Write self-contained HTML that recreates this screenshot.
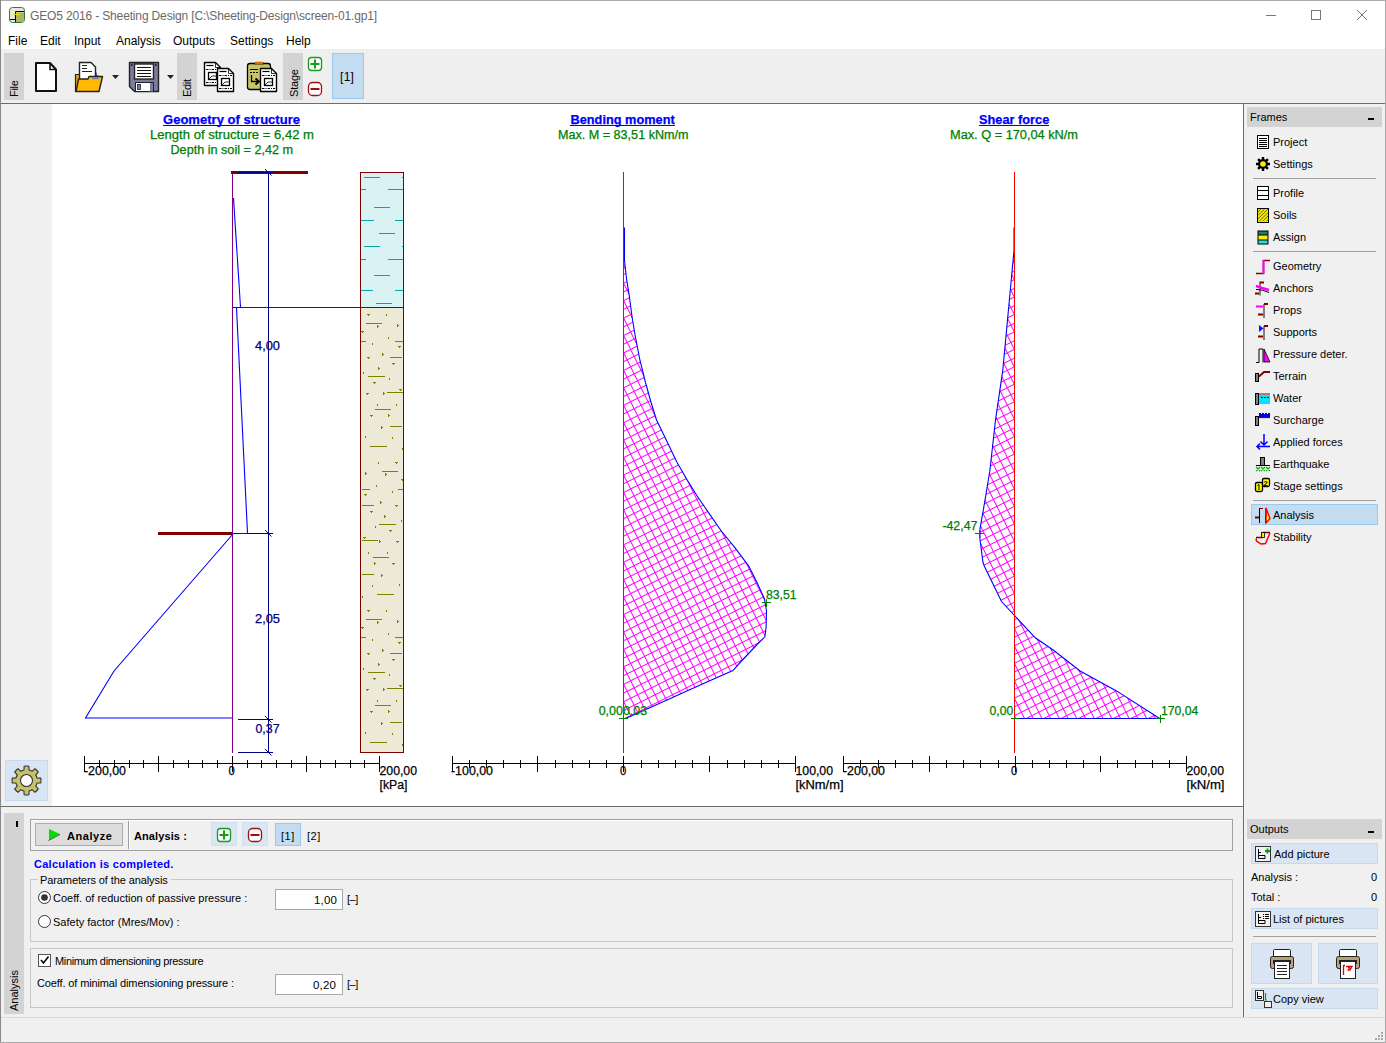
<!DOCTYPE html>
<html><head><meta charset="utf-8">
<style>
*{margin:0;padding:0;box-sizing:border-box}
html,body{width:1386px;height:1043px;overflow:hidden;background:#fff}
body{position:relative;font-family:"Liberation Sans",sans-serif;font-size:11px;color:#000}
.a{position:absolute}
.t{position:absolute;white-space:nowrap;line-height:1}
svg{position:absolute;left:0;top:0}
</style></head><body>
<!-- window borders -->
<div class="a" style="left:0;top:0;width:1386px;height:1px;background:#aaa"></div>
<div class="a" style="left:0;top:0;width:1px;height:1043px;background:#888"></div>
<div class="a" style="left:1385px;top:0;width:1px;height:1043px;background:#aaa"></div>
<div class="a" style="left:0;top:1042px;width:1386px;height:1px;background:#aaa"></div>

<!-- title -->
<div class="t" style="left:30px;top:10px;font-size:12px;color:#6a6a6a;letter-spacing:-0.15px">GEO5 2016 - Sheeting Design [C:\Sheeting-Design\screen-01.gp1]</div>
<!-- menu -->
<div class="t" style="left:8px;top:35px;font-size:12px;color:#000">File</div>
<div class="t" style="left:40px;top:35px;font-size:12px">Edit</div>
<div class="t" style="left:74px;top:35px;font-size:12px">Input</div>
<div class="t" style="left:116px;top:35px;font-size:12px">Analysis</div>
<div class="t" style="left:173px;top:35px;font-size:12px">Outputs</div>
<div class="t" style="left:230px;top:35px;font-size:12px">Settings</div>
<div class="t" style="left:286px;top:35px;font-size:12px">Help</div>

<!-- toolbar -->
<div class="a" style="left:1px;top:49px;width:1384px;height:54px;background:#efefef"></div>
<div class="a" style="left:1px;top:103px;width:1384px;height:1px;background:#6d6d6d"></div>


<!-- title icon -->
<svg width="1386" height="104" style="left:0;top:0">
 <rect x="9.5" y="7.5" width="15" height="15" rx="3" fill="#e9e9d8" stroke="#2e7d32" stroke-width="1"/>
 <path d="M15.5 12.5 H24 V22 H15.5 Z" fill="#b3b060"/>
 <path d="M10 19.5 H15.5 V22" fill="none" stroke="#000" stroke-width="1"/>
 <path d="M15.5 22 V11.5 H24" fill="none" stroke="#000" stroke-width="1"/>
 <path d="M13 14.5 H20" stroke="#e8e800" stroke-width="1"/>
 <!-- window controls -->
 <path d="M1266 15.5 H1276" stroke="#777" stroke-width="1"/>
 <rect x="1311.5" y="10.5" width="9" height="9" fill="none" stroke="#777" stroke-width="1"/>
 <path d="M1357 10 L1367 20 M1367 10 L1357 20" stroke="#777" stroke-width="1"/>
 <!-- toolbar tabs -->
 <rect x="4" y="53" width="20" height="47" fill="#d3d3d3"/>
 <rect x="177" y="53" width="20" height="47" fill="#d3d3d3"/>
 <rect x="283" y="53" width="20" height="47" fill="#d3d3d3"/>
 <text transform="translate(18,97) rotate(-90)" font-family="Liberation Sans" font-size="11" fill="#000" letter-spacing="-0.3">File</text>
 <text transform="translate(191,97) rotate(-90)" font-family="Liberation Sans" font-size="11" fill="#000" letter-spacing="-0.3">Edit</text>
 <text transform="translate(298,97) rotate(-90)" font-family="Liberation Sans" font-size="11" fill="#000" letter-spacing="-0.2">Stage</text>
 <!-- new doc -->
 <path d="M36 63 H50 L56 69.5 V91 H36 Z" fill="#fff" stroke="#111" stroke-width="2" stroke-linejoin="round"/>
 <path d="M50 63 V69.5 H56" fill="none" stroke="#111" stroke-width="1.6"/>
 <!-- open folder -->
 <path d="M75.5 74.5 H80 V73 H96 V76 H98 V91.5 H75.5 Z" fill="#f0a800" stroke="#222" stroke-width="1.2"/>
 <path d="M79.5 62.5 H91 L95.5 67 V80 H79.5 Z" fill="#fff" stroke="#222" stroke-width="1.4"/>
 <path d="M82 65.5 H87 M82 68.5 H87 M82 71.5 H92" stroke="#222" stroke-width="1"/>
 <path d="M78.5 79 H88 L89 76.5 H102.5 L99 91.5 H76 Z" fill="#ffb900" stroke="#222" stroke-width="1.4" stroke-linejoin="round"/>
 <path d="M92 78.5 H99" stroke="#7a7aa0" stroke-width="1.5"/>
 <path d="M112 75 H119 L115.5 79 Z" fill="#222"/>
 <!-- save -->
 <path d="M129.5 62.5 H158.5 V91.5 H134.5 L129.5 86.5 Z" fill="#7c7ca3" stroke="#222" stroke-width="1.4" stroke-linejoin="round"/>
 <rect x="134.5" y="64" width="19" height="15" fill="#fff" stroke="#222" stroke-width="1.4"/>
 <path d="M137 67.5 H151 M137 70.5 H151 M137 73.5 H151 M137 76.5 H151" stroke="#111" stroke-width="1"/>
 <rect x="135.5" y="82.5" width="18" height="9" fill="#fff" stroke="#222" stroke-width="1"/>
 <rect x="137.5" y="84.5" width="3" height="5" fill="#7c7ca3" stroke="#222" stroke-width="0.8"/>
 <rect x="150" y="83" width="3" height="8.5" fill="#7c7ca3"/>
 <rect x="131" y="64" width="1.5" height="2" fill="#222"/><rect x="155" y="64" width="1.5" height="2" fill="#222"/>
 <path d="M167 75 H174 L170.5 79 Z" fill="#222"/>
 <!-- copy -->
 <path d="M204.5 62.5 H215.5 L220.5 67.5 V85.5 H204.5 Z" fill="#fff" stroke="#000" stroke-width="1.4" stroke-linejoin="round"/>
 <path d="M215.5 63 V67.5 H220" fill="none" stroke="#000" stroke-width="0.8"/>
 <path d="M206.5 65.5 H213.5" stroke="#000" stroke-width="1.2"/>
 <path d="M206 69.5 H219" stroke="#000" stroke-width="1" stroke-dasharray="2.5 1 1 1"/>
 <path d="M206 82.5 H219" stroke="#000" stroke-width="1" stroke-dasharray="2.5 1 1 1"/>
 <rect x="208.5" y="72.5" width="8" height="7" fill="#fff" stroke="#000" stroke-width="1.3"/>
 <path d="M209 79 L212 76 H216" fill="none" stroke="#000" stroke-width="0.8"/>
<path d="M217.5 68.5 H228.5 L233.5 73.5 V91.5 H217.5 Z" fill="#fff" stroke="#000" stroke-width="1.4" stroke-linejoin="round"/>
 <path d="M228.5 69 V73.5 H233" fill="none" stroke="#000" stroke-width="0.8"/>
 <path d="M219.5 71.5 H226.5" stroke="#000" stroke-width="1.2"/>
 <path d="M219 75.5 H232" stroke="#000" stroke-width="1" stroke-dasharray="2.5 1 1 1"/>
 <path d="M219 88.5 H232" stroke="#000" stroke-width="1" stroke-dasharray="2.5 1 1 1"/>
 <rect x="221.5" y="78.5" width="8" height="7" fill="#fff" stroke="#000" stroke-width="1.3"/>
 <path d="M222 85 L225 82 H229" fill="none" stroke="#000" stroke-width="0.8"/>
<!-- paste -->
 <rect x="247.5" y="63.5" width="23" height="26" rx="2.5" fill="#c9c567" stroke="#000" stroke-width="1.3"/>
 <path d="M254 63.5 H264" stroke="#000" stroke-width="1.6"/>
 <path d="M256 63 H262" stroke="#d07000" stroke-width="2.4" stroke-linecap="round"/>
 <path d="M250 69.5 H258" stroke="#000" stroke-width="1"/>
 <path d="M250 72.5 H258" stroke="#000" stroke-width="1" stroke-dasharray="2 1"/>
 <path d="M251.5 75 V81.5 H258" fill="none" stroke="#000" stroke-width="1.3"/>
 <path d="M255.5 78.5 L259 81.5 L255.5 84.5" fill="none" stroke="#000" stroke-width="1.8"/>
 <path d="M260.5 68.5 H271.5 L276.5 73.5 V91.5 H260.5 Z" fill="#fff" stroke="#000" stroke-width="1.4" stroke-linejoin="round"/>
 <path d="M271.5 69 V73.5 H276" fill="none" stroke="#000" stroke-width="0.8"/>
 <path d="M262.5 71.5 H269.5" stroke="#000" stroke-width="1.2"/>
 <path d="M262 75.5 H275" stroke="#000" stroke-width="1" stroke-dasharray="2.5 1 1 1"/>
 <path d="M262 88.5 H275" stroke="#000" stroke-width="1" stroke-dasharray="2.5 1 1 1"/>
 <rect x="264.5" y="78.5" width="8" height="7" fill="#fff" stroke="#000" stroke-width="1.3"/>
 <path d="M265 85 L268 82 H272" fill="none" stroke="#000" stroke-width="0.8"/>
 <!-- stage + - -->
 <rect x="308.5" y="57.5" width="13" height="13" rx="3" fill="#fff" stroke="#1a9a1a" stroke-width="1.3"/>
 <path d="M315 59.5 V68.5 M310.5 64 H319.5" stroke="#1a9a1a" stroke-width="2"/>
 <rect x="308.5" y="82.5" width="13" height="13" rx="4" fill="#fff" stroke="#a01010" stroke-width="1.3"/>
 <path d="M310.5 89 H319.5" stroke="#a01010" stroke-width="2"/>
 <rect x="332.5" y="53.5" width="31" height="45" fill="#c4dcf2" stroke="#99c9ef" stroke-width="1"/>
</svg>
<div class="t" style="left:340px;top:71px;font-size:12px;color:#000;letter-spacing:0.3px">[1]</div>

<!-- left strip -->
<div class="a" style="left:1px;top:104px;width:51px;height:702px;background:#f0f0f0"></div>
<!-- CHART START -->
<svg width="1386" height="1043" style="left:0;top:0" shape-rendering="crispEdges">
<defs>
<pattern id="hatch" patternUnits="userSpaceOnUse" width="7.8" height="7.8" patternTransform="translate(623,562) rotate(-26.57)">
<path d="M0 0.5 H7.8 M0.5 0 V7.8" stroke="#ff00ff" stroke-width="1" shape-rendering="auto"/>
</pattern>
<clipPath id="soilclip"><rect x="361" y="308" width="42" height="444"/></clipPath>
</defs>
<rect x="52" y="104" width="1191" height="702" fill="#fff"/>
<rect x="84.4" y="763" width="295.79999999999995" height="1" fill="#000"/>
<rect x="84" y="756" width="1" height="16" fill="#000"/>
<rect x="99" y="760" width="1" height="8" fill="#000"/>
<rect x="114" y="760" width="1" height="8" fill="#000"/>
<rect x="129" y="760" width="1" height="8" fill="#000"/>
<rect x="143" y="760" width="1" height="8" fill="#000"/>
<rect x="158" y="756" width="1" height="16" fill="#000"/>
<rect x="173" y="760" width="1" height="8" fill="#000"/>
<rect x="188" y="760" width="1" height="8" fill="#000"/>
<rect x="202" y="760" width="1" height="8" fill="#000"/>
<rect x="217" y="760" width="1" height="8" fill="#000"/>
<rect x="232" y="756" width="1" height="16" fill="#000"/>
<rect x="247" y="760" width="1" height="8" fill="#000"/>
<rect x="261" y="760" width="1" height="8" fill="#000"/>
<rect x="276" y="760" width="1" height="8" fill="#000"/>
<rect x="291" y="760" width="1" height="8" fill="#000"/>
<rect x="306" y="756" width="1" height="16" fill="#000"/>
<rect x="320" y="760" width="1" height="8" fill="#000"/>
<rect x="335" y="760" width="1" height="8" fill="#000"/>
<rect x="350" y="760" width="1" height="8" fill="#000"/>
<rect x="364" y="760" width="1" height="8" fill="#000"/>
<rect x="379" y="756" width="1" height="16" fill="#000"/>
<rect x="451.5" y="763" width="344.79999999999995" height="1" fill="#000"/>
<rect x="452" y="756" width="1" height="16" fill="#000"/>
<rect x="469" y="760" width="1" height="8" fill="#000"/>
<rect x="486" y="760" width="1" height="8" fill="#000"/>
<rect x="503" y="760" width="1" height="8" fill="#000"/>
<rect x="520" y="760" width="1" height="8" fill="#000"/>
<rect x="537" y="756" width="1" height="16" fill="#000"/>
<rect x="555" y="760" width="1" height="8" fill="#000"/>
<rect x="572" y="760" width="1" height="8" fill="#000"/>
<rect x="589" y="760" width="1" height="8" fill="#000"/>
<rect x="606" y="760" width="1" height="8" fill="#000"/>
<rect x="623" y="756" width="1" height="16" fill="#000"/>
<rect x="641" y="760" width="1" height="8" fill="#000"/>
<rect x="658" y="760" width="1" height="8" fill="#000"/>
<rect x="675" y="760" width="1" height="8" fill="#000"/>
<rect x="692" y="760" width="1" height="8" fill="#000"/>
<rect x="709" y="756" width="1" height="16" fill="#000"/>
<rect x="727" y="760" width="1" height="8" fill="#000"/>
<rect x="744" y="760" width="1" height="8" fill="#000"/>
<rect x="761" y="760" width="1" height="8" fill="#000"/>
<rect x="778" y="760" width="1" height="8" fill="#000"/>
<rect x="795" y="756" width="1" height="16" fill="#000"/>
<rect x="843.3" y="763" width="343.70000000000005" height="1" fill="#000"/>
<rect x="843" y="756" width="1" height="16" fill="#000"/>
<rect x="860" y="760" width="1" height="8" fill="#000"/>
<rect x="878" y="760" width="1" height="8" fill="#000"/>
<rect x="895" y="760" width="1" height="8" fill="#000"/>
<rect x="912" y="760" width="1" height="8" fill="#000"/>
<rect x="929" y="756" width="1" height="16" fill="#000"/>
<rect x="946" y="760" width="1" height="8" fill="#000"/>
<rect x="963" y="760" width="1" height="8" fill="#000"/>
<rect x="980" y="760" width="1" height="8" fill="#000"/>
<rect x="998" y="760" width="1" height="8" fill="#000"/>
<rect x="1015" y="756" width="1" height="16" fill="#000"/>
<rect x="1032" y="760" width="1" height="8" fill="#000"/>
<rect x="1049" y="760" width="1" height="8" fill="#000"/>
<rect x="1066" y="760" width="1" height="8" fill="#000"/>
<rect x="1083" y="760" width="1" height="8" fill="#000"/>
<rect x="1100" y="756" width="1" height="16" fill="#000"/>
<rect x="1117" y="760" width="1" height="8" fill="#000"/>
<rect x="1135" y="760" width="1" height="8" fill="#000"/>
<rect x="1152" y="760" width="1" height="8" fill="#000"/>
<rect x="1169" y="760" width="1" height="8" fill="#000"/>
<rect x="1186" y="756" width="1" height="16" fill="#000"/>
<rect x="361" y="173" width="42" height="134" fill="#d9f2f3"/>
<rect x="361" y="308" width="42" height="444" fill="#ecead6"/>
<rect x="364" y="177" width="16" height="1" fill="#00a8a8"/>
<rect x="402" y="177" width="1" height="1" fill="#00a8a8"/>
<rect x="361" y="189" width="5" height="1" fill="#00a8a8"/>
<rect x="388" y="189" width="15" height="1" fill="#00a8a8"/>
<rect x="374" y="207" width="16" height="1" fill="#00a8a8"/>
<rect x="361" y="220" width="13" height="1" fill="#00a8a8"/>
<rect x="395" y="220" width="8" height="1" fill="#00a8a8"/>
<rect x="379" y="233" width="16" height="1" fill="#00a8a8"/>
<rect x="364" y="246" width="16" height="1" fill="#00a8a8"/>
<rect x="402" y="246" width="1" height="1" fill="#00a8a8"/>
<rect x="361" y="259" width="5" height="1" fill="#00a8a8"/>
<rect x="388" y="259" width="15" height="1" fill="#00a8a8"/>
<rect x="374" y="275" width="16" height="1" fill="#00a8a8"/>
<rect x="361" y="290" width="12" height="1" fill="#00a8a8"/>
<rect x="395" y="290" width="8" height="1" fill="#00a8a8"/>
<rect x="376" y="303" width="16" height="1" fill="#00a8a8"/>
<g clip-path="url(#soilclip)" fill="#808000">
<rect x="366" y="323" width="16" height="1"/>
<rect x="361" y="341" width="5" height="1"/>
<rect x="395" y="341" width="8" height="1"/>
<rect x="390" y="357" width="12" height="1"/>
<rect x="368" y="376" width="17" height="1"/>
<rect x="387" y="392" width="16" height="1"/>
<rect x="375" y="409" width="16" height="1"/>
<rect x="390" y="426" width="12" height="1"/>
<rect x="370" y="446" width="17" height="1"/>
<rect x="367" y="314" width="3" height="1"/><rect x="368" y="315" width="1" height="1"/>
<rect x="361" y="331" width="3" height="1"/><rect x="362" y="332" width="1" height="1"/>
<rect x="398" y="346" width="3" height="1"/><rect x="399" y="347" width="1" height="1"/>
<rect x="367" y="357" width="3" height="1"/><rect x="368" y="358" width="1" height="1"/>
<rect x="392" y="363" width="3" height="1"/><rect x="393" y="364" width="1" height="1"/>
<rect x="373" y="382" width="3" height="1"/><rect x="374" y="383" width="1" height="1"/>
<rect x="366" y="393" width="3" height="1"/><rect x="367" y="394" width="1" height="1"/>
<rect x="399" y="389" width="3" height="1"/><rect x="400" y="390" width="1" height="1"/>
<rect x="370" y="415" width="3" height="1"/><rect x="371" y="416" width="1" height="1"/>
<rect x="377" y="325" width="1" height="3"/><rect x="378" y="326" width="1" height="1"/>
<rect x="397" y="324" width="1" height="3"/><rect x="398" y="325" width="1" height="1"/>
<rect x="382" y="353" width="1" height="3"/><rect x="383" y="354" width="1" height="1"/>
<rect x="378" y="367" width="1" height="3"/><rect x="379" y="368" width="1" height="1"/>
<rect x="383" y="392" width="1" height="3"/><rect x="384" y="393" width="1" height="1"/>
<rect x="388" y="414" width="1" height="3"/><rect x="389" y="415" width="1" height="1"/>
<rect x="381" y="426" width="1" height="3"/><rect x="382" y="427" width="1" height="1"/>
<rect x="386" y="314" width="1" height="2"/>
<rect x="388" y="337" width="1" height="2"/>
<rect x="372" y="343" width="1" height="2"/>
<rect x="363" y="372" width="1" height="2"/>
<rect x="389" y="378" width="1" height="2"/>
<rect x="377" y="404" width="1" height="2"/>
<rect x="396" y="404" width="1" height="2"/>
<rect x="365" y="436" width="1" height="2"/>
<rect x="392" y="437" width="1" height="2"/>
<rect x="402" y="448" width="1" height="2"/>
<rect x="382" y="471" width="16" height="1"/>
<rect x="398" y="489" width="5" height="1"/>
<rect x="362" y="489" width="8" height="1"/>
<rect x="362" y="505" width="12" height="1"/>
<rect x="379" y="524" width="17" height="1"/>
<rect x="362" y="540" width="16" height="1"/>
<rect x="373" y="557" width="16" height="1"/>
<rect x="362" y="574" width="12" height="1"/>
<rect x="377" y="594" width="17" height="1"/>
<rect x="395" y="462" width="3" height="1"/><rect x="396" y="463" width="1" height="1"/>
<rect x="401" y="479" width="3" height="1"/><rect x="402" y="480" width="1" height="1"/>
<rect x="364" y="494" width="3" height="1"/><rect x="365" y="495" width="1" height="1"/>
<rect x="395" y="505" width="3" height="1"/><rect x="396" y="506" width="1" height="1"/>
<rect x="370" y="511" width="3" height="1"/><rect x="371" y="512" width="1" height="1"/>
<rect x="389" y="530" width="3" height="1"/><rect x="390" y="531" width="1" height="1"/>
<rect x="396" y="541" width="3" height="1"/><rect x="397" y="542" width="1" height="1"/>
<rect x="363" y="537" width="3" height="1"/><rect x="364" y="538" width="1" height="1"/>
<rect x="392" y="563" width="3" height="1"/><rect x="393" y="564" width="1" height="1"/>
<rect x="385" y="473" width="1" height="3"/><rect x="386" y="474" width="1" height="1"/>
<rect x="365" y="472" width="1" height="3"/><rect x="366" y="473" width="1" height="1"/>
<rect x="380" y="501" width="1" height="3"/><rect x="381" y="502" width="1" height="1"/>
<rect x="384" y="515" width="1" height="3"/><rect x="385" y="516" width="1" height="1"/>
<rect x="379" y="540" width="1" height="3"/><rect x="380" y="541" width="1" height="1"/>
<rect x="374" y="562" width="1" height="3"/><rect x="375" y="563" width="1" height="1"/>
<rect x="381" y="574" width="1" height="3"/><rect x="382" y="575" width="1" height="1"/>
<rect x="378" y="462" width="1" height="2"/>
<rect x="376" y="485" width="1" height="2"/>
<rect x="392" y="491" width="1" height="2"/>
<rect x="401" y="520" width="1" height="2"/>
<rect x="375" y="526" width="1" height="2"/>
<rect x="387" y="552" width="1" height="2"/>
<rect x="368" y="552" width="1" height="2"/>
<rect x="399" y="584" width="1" height="2"/>
<rect x="372" y="585" width="1" height="2"/>
<rect x="362" y="596" width="1" height="2"/>
<rect x="366" y="619" width="16" height="1"/>
<rect x="361" y="637" width="5" height="1"/>
<rect x="395" y="637" width="8" height="1"/>
<rect x="390" y="653" width="12" height="1"/>
<rect x="368" y="672" width="17" height="1"/>
<rect x="387" y="688" width="16" height="1"/>
<rect x="375" y="705" width="16" height="1"/>
<rect x="390" y="722" width="12" height="1"/>
<rect x="370" y="742" width="17" height="1"/>
<rect x="367" y="610" width="3" height="1"/><rect x="368" y="611" width="1" height="1"/>
<rect x="361" y="627" width="3" height="1"/><rect x="362" y="628" width="1" height="1"/>
<rect x="398" y="642" width="3" height="1"/><rect x="399" y="643" width="1" height="1"/>
<rect x="367" y="653" width="3" height="1"/><rect x="368" y="654" width="1" height="1"/>
<rect x="392" y="659" width="3" height="1"/><rect x="393" y="660" width="1" height="1"/>
<rect x="373" y="678" width="3" height="1"/><rect x="374" y="679" width="1" height="1"/>
<rect x="366" y="689" width="3" height="1"/><rect x="367" y="690" width="1" height="1"/>
<rect x="399" y="685" width="3" height="1"/><rect x="400" y="686" width="1" height="1"/>
<rect x="370" y="711" width="3" height="1"/><rect x="371" y="712" width="1" height="1"/>
<rect x="377" y="621" width="1" height="3"/><rect x="378" y="622" width="1" height="1"/>
<rect x="397" y="620" width="1" height="3"/><rect x="398" y="621" width="1" height="1"/>
<rect x="382" y="649" width="1" height="3"/><rect x="383" y="650" width="1" height="1"/>
<rect x="378" y="663" width="1" height="3"/><rect x="379" y="664" width="1" height="1"/>
<rect x="383" y="688" width="1" height="3"/><rect x="384" y="689" width="1" height="1"/>
<rect x="388" y="710" width="1" height="3"/><rect x="389" y="711" width="1" height="1"/>
<rect x="381" y="722" width="1" height="3"/><rect x="382" y="723" width="1" height="1"/>
<rect x="386" y="610" width="1" height="2"/>
<rect x="388" y="633" width="1" height="2"/>
<rect x="372" y="639" width="1" height="2"/>
<rect x="363" y="668" width="1" height="2"/>
<rect x="389" y="674" width="1" height="2"/>
<rect x="377" y="700" width="1" height="2"/>
<rect x="396" y="700" width="1" height="2"/>
<rect x="365" y="732" width="1" height="2"/>
<rect x="392" y="733" width="1" height="2"/>
<rect x="402" y="744" width="1" height="2"/>
</g>
<rect x="360.5" y="172.5" width="43" height="580" fill="none" stroke="#800000" stroke-width="1"/>
<rect x="232" y="307" width="172" height="1" fill="#800000"/>
<rect x="231" y="171" width="77" height="3" fill="#800000"/>
<rect x="158" y="532" width="75" height="3" fill="#800000"/>
<rect x="232" y="173" width="1" height="580" fill="#800080"/>
<rect x="268" y="172" width="1" height="581" fill="#000080"/>
<rect x="238" y="172" width="35" height="1" fill="#000080"/>
<rect x="233" y="533" width="40" height="1" fill="#000080"/>
<rect x="238" y="719" width="35" height="1" fill="#000080"/>
<rect x="238" y="752" width="35" height="1" fill="#000080"/>
<path d="M265 169 L271.5 175.5" stroke="#000080" stroke-width="1" shape-rendering="auto"/>
<path d="M265 530 L271.5 536.5" stroke="#000080" stroke-width="1" shape-rendering="auto"/>
<path d="M265 716 L271.5 722.5" stroke="#000080" stroke-width="1" shape-rendering="auto"/>
<path d="M265 749 L271.5 755.5" stroke="#000080" stroke-width="1" shape-rendering="auto"/>
<g fill="none" stroke="#0000ff" stroke-width="1.1" shape-rendering="auto">
<path d="M233.5 198 L240.5 307"/>
<path d="M236.5 308 L247.5 533"/>
<path d="M233 534 L114 671 L85.5 718 H232"/>
</g>
<rect x="233" y="533" width="15" height="1" fill="#0000ff"/>
<path d="M623.5 227.5 L624.5 227.5 L624.5 260.5 L626.5 278.5 L629.2 295.3 L632.0 316.5 L635.5 337.5 L640.0 360.5 L645.5 382.5 L650.5 400.5 L656.5 420.0 L666.5 440.5 L676.8 462.0 L687.5 480.5 L696.8 495.5 L707.5 511.1 L721.3 531.0 L735.1 547.9 L748.9 566.3 L756.5 581.5 L764.3 598.5 L766.5 610.5 L766.1 627.5 L764.9 636.8 L757.1 644.5 L741.5 661.0 L732.9 670.5 L705.2 682.7 L649.8 707.8 L625.5 718.5 L623.5 718.5 Z" fill="url(#hatch)" stroke="none" shape-rendering="auto"/>
<path d="M624.5 227.5 L624.5 260.5 L626.5 278.5 L629.2 295.3 L632.0 316.5 L635.5 337.5 L640.0 360.5 L645.5 382.5 L650.5 400.5 L656.5 420.0 L666.5 440.5 L676.8 462.0 L687.5 480.5 L696.8 495.5 L707.5 511.1 L721.3 531.0 L735.1 547.9 L748.9 566.3 L756.5 581.5 L764.3 598.5 L766.5 610.5 L766.1 627.5 L764.9 636.8 L757.1 644.5 L741.5 661.0 L732.9 670.5 L705.2 682.7 L649.8 707.8 L625.5 718.5" fill="none" stroke="#0000ff" stroke-width="1.1" shape-rendering="auto"/>
<rect x="623" y="172" width="1" height="581" fill="#ff0000"/>
<path d="M1014.5 227.5 L1014.0 227.5 L1014.0 250.5 L1009.8 295.5 L1002.8 370.1 L995.5 420.0 L989.9 470.5 L986.1 493.5 L983.0 511.9 L980.0 528.8 L980.0 539.5 L983.0 562.5 L984.5 566.5 L1001.5 601.5 L1014.5 615.5 L1035.3 637.8 L1053.5 650.3 L1080.1 671.0 L1116.5 690.9 L1159.7 718.5 L1014.5 718.5 Z" fill="url(#hatch)" stroke="none" shape-rendering="auto"/>
<path d="M1014.0 227.5 L1014.0 250.5 L1009.8 295.5 L1002.8 370.1 L995.5 420.0 L989.9 470.5 L986.1 493.5 L983.0 511.9 L980.0 528.8 L980.0 539.5 L983.0 562.5 L984.5 566.5 L1001.5 601.5 L1014.5 615.5 L1035.3 637.8 L1053.5 650.3 L1080.1 671.0 L1116.5 690.9 L1159.7 718.5 L1014.5 718.5" fill="none" stroke="#0000ff" stroke-width="1.1" shape-rendering="auto"/>
<rect x="1014" y="172" width="1" height="581" fill="#ff0000"/>
<rect x="762" y="602" width="9" height="1" fill="#008000"/>
<rect x="766" y="599" width="1" height="8" fill="#008000"/>
<rect x="975" y="533" width="9" height="1" fill="#008000"/>
<rect x="979" y="530" width="1" height="8" fill="#008000"/>
<rect x="1156" y="718" width="9" height="1" fill="#008000"/>
<rect x="1160" y="715" width="1" height="8" fill="#008000"/>
<rect x="619" y="718" width="9" height="1" fill="#008000"/>
<rect x="1011" y="718" width="8" height="1" fill="#008000"/>
<text x="163" y="124" textLength="137" lengthAdjust="spacingAndGlyphs" font-family="Liberation Sans" font-size="12.3" fill="#0000ff" font-weight="bold" shape-rendering="auto" stroke="#0000ff" stroke-width="0.25">Geometry of structure</text>
<rect x="163" y="125" width="137" height="1" fill="#0000ff"/>
<text x="150" y="139" textLength="164" lengthAdjust="spacingAndGlyphs" font-family="Liberation Sans" font-size="12.3" fill="#008000" shape-rendering="auto" stroke="#008000" stroke-width="0.25">Length of structure = 6,42 m</text>
<text x="170.5" y="154" textLength="122.5" lengthAdjust="spacingAndGlyphs" font-family="Liberation Sans" font-size="12.3" fill="#008000" shape-rendering="auto" stroke="#008000" stroke-width="0.25">Depth in soil = 2,42 m</text>
<text x="570.5" y="124" textLength="104.2" lengthAdjust="spacingAndGlyphs" font-family="Liberation Sans" font-size="12.3" fill="#0000ff" font-weight="bold" shape-rendering="auto" stroke="#0000ff" stroke-width="0.25">Bending moment</text>
<rect x="570" y="125" width="105" height="1" fill="#0000ff"/>
<text x="558" y="139" textLength="130.5" lengthAdjust="spacingAndGlyphs" font-family="Liberation Sans" font-size="12.3" fill="#008000" shape-rendering="auto" stroke="#008000" stroke-width="0.25">Max. M = 83,51 kNm/m</text>
<text x="979" y="124" textLength="70.3" lengthAdjust="spacingAndGlyphs" font-family="Liberation Sans" font-size="12.3" fill="#0000ff" font-weight="bold" shape-rendering="auto" stroke="#0000ff" stroke-width="0.25">Shear force</text>
<rect x="979" y="125" width="70" height="1" fill="#0000ff"/>
<text x="950" y="139" textLength="128" lengthAdjust="spacingAndGlyphs" font-family="Liberation Sans" font-size="12.3" fill="#008000" shape-rendering="auto" stroke="#008000" stroke-width="0.25">Max. Q = 170,04 kN/m</text>
<text x="255" y="350" textLength="25" lengthAdjust="spacingAndGlyphs" font-family="Liberation Sans" font-size="12.3" fill="#000080" shape-rendering="auto" stroke="#000080" stroke-width="0.25">4,00</text>
<text x="255" y="623" textLength="25" lengthAdjust="spacingAndGlyphs" font-family="Liberation Sans" font-size="12.3" fill="#000080" shape-rendering="auto" stroke="#000080" stroke-width="0.25">2,05</text>
<text x="255.5" y="733" textLength="24" lengthAdjust="spacingAndGlyphs" font-family="Liberation Sans" font-size="12.3" fill="#000080" shape-rendering="auto" stroke="#000080" stroke-width="0.25">0,37</text>
<text x="84" y="775" textLength="42" lengthAdjust="spacingAndGlyphs" font-family="Liberation Sans" font-size="12.3" fill="#000" shape-rendering="auto" stroke="#000" stroke-width="0.25">-200,00</text>
<text x="228.5" y="775" textLength="6.2" lengthAdjust="spacingAndGlyphs" font-family="Liberation Sans" font-size="12.3" fill="#000" shape-rendering="auto" stroke="#000" stroke-width="0.25">0</text>
<text x="379.5" y="775" textLength="37.5" lengthAdjust="spacingAndGlyphs" font-family="Liberation Sans" font-size="12.3" fill="#000" shape-rendering="auto" stroke="#000" stroke-width="0.25">200,00</text>
<text x="379.5" y="789" textLength="28" lengthAdjust="spacingAndGlyphs" font-family="Liberation Sans" font-size="12.3" fill="#000" shape-rendering="auto" stroke="#000" stroke-width="0.25">[kPa]</text>
<text x="451" y="775" textLength="42" lengthAdjust="spacingAndGlyphs" font-family="Liberation Sans" font-size="12.3" fill="#000" shape-rendering="auto" stroke="#000" stroke-width="0.25">-100,00</text>
<text x="620" y="775" textLength="6.2" lengthAdjust="spacingAndGlyphs" font-family="Liberation Sans" font-size="12.3" fill="#000" shape-rendering="auto" stroke="#000" stroke-width="0.25">0</text>
<text x="795.5" y="775" textLength="37.5" lengthAdjust="spacingAndGlyphs" font-family="Liberation Sans" font-size="12.3" fill="#000" shape-rendering="auto" stroke="#000" stroke-width="0.25">100,00</text>
<text x="795.5" y="789" textLength="48" lengthAdjust="spacingAndGlyphs" font-family="Liberation Sans" font-size="12.3" fill="#000" shape-rendering="auto" stroke="#000" stroke-width="0.25">[kNm/m]</text>
<text x="843" y="775" textLength="42" lengthAdjust="spacingAndGlyphs" font-family="Liberation Sans" font-size="12.3" fill="#000" shape-rendering="auto" stroke="#000" stroke-width="0.25">-200,00</text>
<text x="1011" y="775" textLength="6.2" lengthAdjust="spacingAndGlyphs" font-family="Liberation Sans" font-size="12.3" fill="#000" shape-rendering="auto" stroke="#000" stroke-width="0.25">0</text>
<text x="1186.5" y="775" textLength="37.5" lengthAdjust="spacingAndGlyphs" font-family="Liberation Sans" font-size="12.3" fill="#000" shape-rendering="auto" stroke="#000" stroke-width="0.25">200,00</text>
<text x="1186.5" y="789" textLength="38" lengthAdjust="spacingAndGlyphs" font-family="Liberation Sans" font-size="12.3" fill="#000" shape-rendering="auto" stroke="#000" stroke-width="0.25">[kN/m]</text>
<text x="766" y="599" textLength="30.5" lengthAdjust="spacingAndGlyphs" font-family="Liberation Sans" font-size="12.3" fill="#008000" shape-rendering="auto" stroke="#008000" stroke-width="0.25">83,51</text>
<text x="598.7" y="715" textLength="48.5" lengthAdjust="spacingAndGlyphs" font-family="Liberation Sans" font-size="12.3" fill="#008000" shape-rendering="auto" stroke="#008000" stroke-width="0.25">0,000,03</text>
<text x="942.4" y="530" textLength="35" lengthAdjust="spacingAndGlyphs" font-family="Liberation Sans" font-size="12.3" fill="#008000" shape-rendering="auto" stroke="#008000" stroke-width="0.25">-42,47</text>
<text x="989.6" y="715" textLength="23.6" lengthAdjust="spacingAndGlyphs" font-family="Liberation Sans" font-size="12.3" fill="#008000" shape-rendering="auto" stroke="#008000" stroke-width="0.25">0,00</text>
<text x="1161" y="715" textLength="37.2" lengthAdjust="spacingAndGlyphs" font-family="Liberation Sans" font-size="12.3" fill="#008000" shape-rendering="auto" stroke="#008000" stroke-width="0.25">170,04</text>
</svg>
<!-- CHART END -->
<!-- right panel -->
<div class="a" style="left:1243px;top:104px;width:1px;height:913px;background:#6d6d6d"></div>
<div class="a" style="left:1244px;top:104px;width:141px;height:913px;background:#f0f0f0"></div>
<!-- right panel content -->
<div class="a" style="left:1247px;top:107px;width:135px;height:20px;background:#d3d3d3"></div>
<div class="t" style="left:1250px;top:112px;font-size:11px;color:#000">Frames</div>
<div class="a" style="left:1368px;top:118px;width:6px;height:2px;background:#000"></div>
<div class="a" style="left:1253px;top:178px;width:123px;height:1px;background:#a0a0a0"></div>
<div class="a" style="left:1253px;top:251px;width:123px;height:1px;background:#a0a0a0"></div>
<div class="a" style="left:1253px;top:500px;width:123px;height:1px;background:#a0a0a0"></div>
<div class="a" style="left:1251px;top:504px;width:127px;height:21px;background:#c4dcf2;border:1px solid #99c9ef"></div>
<div class="t" style="left:1273px;top:137px;font-size:11px;color:#000">Project</div>
<div class="t" style="left:1273px;top:159px;font-size:11px;color:#000">Settings</div>
<div class="t" style="left:1273px;top:188px;font-size:11px;color:#000">Profile</div>
<div class="t" style="left:1273px;top:210px;font-size:11px;color:#000">Soils</div>
<div class="t" style="left:1273px;top:232px;font-size:11px;color:#000">Assign</div>
<div class="t" style="left:1273px;top:261px;font-size:11px;color:#000">Geometry</div>
<div class="t" style="left:1273px;top:283px;font-size:11px;color:#000">Anchors</div>
<div class="t" style="left:1273px;top:305px;font-size:11px;color:#000">Props</div>
<div class="t" style="left:1273px;top:327px;font-size:11px;color:#000">Supports</div>
<div class="t" style="left:1273px;top:349px;font-size:11px;color:#000">Pressure deter.</div>
<div class="t" style="left:1273px;top:371px;font-size:11px;color:#000">Terrain</div>
<div class="t" style="left:1273px;top:393px;font-size:11px;color:#000">Water</div>
<div class="t" style="left:1273px;top:415px;font-size:11px;color:#000">Surcharge</div>
<div class="t" style="left:1273px;top:437px;font-size:11px;color:#000">Applied forces</div>
<div class="t" style="left:1273px;top:459px;font-size:11px;color:#000">Earthquake</div>
<div class="t" style="left:1273px;top:481px;font-size:11px;color:#000">Stage settings</div>
<div class="t" style="left:1273px;top:510px;font-size:11px;color:#000">Analysis</div>
<div class="t" style="left:1273px;top:532px;font-size:11px;color:#000">Stability</div>

<svg width="1386" height="1043" style="left:0;top:0">
 <!-- Project -->
 <rect x="1257.5" y="135.5" width="11" height="13" fill="#fff" stroke="#000"/>
 <path d="M1259 138.5 H1267 M1259 140.5 H1267 M1259 142.5 H1267 M1259 144.5 H1267 M1259 146.5 H1267" stroke="#000" stroke-width="1"/>
 <!-- Settings gear -->
 <g transform="translate(1263,164)">
  <circle r="5" fill="#000"/>
  <path d="M-1.2 -7 H1.2 V7 H-1.2 Z M-7 -1.2 V1.2 H7 V-1.2 Z" fill="#000"/>
  <path d="M-1.2 -7 H1.2 V7 H-1.2 Z M-7 -1.2 V1.2 H7 V-1.2 Z" fill="#000" transform="rotate(45)"/>
  <circle r="2.8" fill="#ffeb00"/>
 </g>
 <!-- Profile -->
 <rect x="1257.5" y="186.5" width="11" height="13" fill="#fff" stroke="#000"/>
 <path d="M1258 190.5 H1268 M1258 195.5 H1268" stroke="#000"/>
 <!-- Soils -->
 <rect x="1257.5" y="208.5" width="11" height="14" fill="#f2e600" stroke="#000"/>
 <path d="M1258 212 L1261 209 M1258 215.5 L1264.5 209 M1258 219 L1268 209 M1259.5 221 L1268 212.5 M1263 221 L1268 216 M1266.5 221 L1268 219.5" stroke="#6a6000" stroke-width="0.9"/>
 <!-- Assign -->
 <rect x="1257.5" y="230.5" width="11" height="14" fill="#000"/>
 <rect x="1258.5" y="231.5" width="9" height="3" fill="#1e8060"/>
 <rect x="1258.5" y="235.5" width="9" height="4" fill="#ffee00"/>
 <rect x="1258.5" y="240.5" width="9" height="3" fill="#20e0e0"/>
 <!-- Geometry -->
 <path d="M1256 273.5 H1263.5 V260.5 H1270" fill="none" stroke="#8b0000" stroke-width="1.5"/>
 <path d="M1263.5 274 V260" stroke="#ff00ff" stroke-width="2"/>
 <!-- Anchors -->
 <path d="M1260 281.5 V295.5" stroke="#808080" stroke-width="2"/>
 <path d="M1260 282.5 H1264 M1255 293.5 H1259" stroke="#800000" stroke-width="2"/>
 <path d="M1256 289.5 L1262 290 L1269 292.5" stroke="#000" stroke-width="1" fill="none"/>
 <path d="M1256 286 L1262 288 L1269 290" stroke="#ff00ff" stroke-width="2.4" fill="none"/>
 <!-- Props -->
 <path d="M1264 304 V318" stroke="#808080" stroke-width="2"/>
 <path d="M1256 306.5 H1263" stroke="#ff00ff" stroke-width="2"/>
 <path d="M1264 304 H1268 M1258 314.5 H1263" stroke="#800000" stroke-width="2"/>
 <!-- Supports -->
 <path d="M1264 326 V340" stroke="#808080" stroke-width="2"/>
 <path d="M1259 325 L1263.5 328.5 L1259 332 Z" fill="#1010ff"/>
 <path d="M1264 326 H1268 M1258 336.5 H1263" stroke="#800000" stroke-width="2"/>
 <!-- Pressure deter -->
 <path d="M1256 362.5 H1259 V349 H1263 V362.5" fill="none" stroke="#000" stroke-width="1"/>
 <path d="M1264 349 L1270 362 H1264 Z" fill="#ff00ff" stroke="#000" stroke-width="0.8"/>
 <!-- Terrain -->
 <rect x="1255.5" y="373.5" width="3" height="8" fill="#808080" stroke="#000"/>
 <path d="M1259 376.5 L1264 372 H1270" fill="none" stroke="#800000" stroke-width="1.8"/>
 <!-- Water -->
 <rect x="1255.5" y="393.5" width="3" height="11" fill="#808080" stroke="#000"/>
 <rect x="1259" y="395" width="11" height="9" fill="#00e5ff"/>
 <path d="M1259 394 H1270" stroke="#800000" stroke-width="1"/>
 <path d="M1261 397.5 H1269" stroke="#0000ff" stroke-dasharray="2 1"/>
 <!-- Surcharge -->
 <rect x="1255.5" y="416.5" width="3" height="9" fill="#808080" stroke="#000"/>
 <path d="M1259 417.5 H1270" stroke="#800000" stroke-width="1.2"/>
 <rect x="1259" y="413" width="11" height="4" fill="#0000e0"/>
 <path d="M1261 413.5 H1262 M1264 413.5 H1265 M1267 413.5 H1268" stroke="#f0f0f0" stroke-width="1"/>
 <!-- Applied forces -->
 <path d="M1264 434 V445 M1260.5 441.5 L1264 445 L1267.5 441.5" fill="none" stroke="#0000ff" stroke-width="1.5"/>
 <path d="M1270 446.5 H1257 M1260 443.5 L1257 446.5 L1260 449.5" fill="none" stroke="#0000ff" stroke-width="1.5"/>
 <!-- Earthquake -->
 <rect x="1260.5" y="457.5" width="4" height="8" fill="#808080" stroke="#000"/>
 <path d="M1256 465.5 H1270" stroke="#000"/>
 <path d="M1256 467 L1260 471 M1260 467 L1256 471 M1261 467 L1265 471 M1265 467 L1261 471 M1266 467 L1270 471 M1270 467 L1266 471" fill="none" stroke="#00b000" stroke-width="1.1"/>
 <!-- Stage settings -->
 <rect x="1262.5" y="478.5" width="7" height="8" rx="1.5" fill="#ffff00" stroke="#000" stroke-width="1.3"/>
 <rect x="1255.5" y="482.5" width="7" height="9" rx="1.5" fill="#ffff00" stroke="#000" stroke-width="1.3"/>
 <path d="M1257.5 485.5 L1259 484.5 V490" fill="none" stroke="#000" stroke-width="1"/>
 <text x="1263.6" y="485.6" font-family="Liberation Sans" font-size="7.5" font-weight="bold">2</text>
 <!-- Analysis -->
 <path d="M1255 517.5 H1259" stroke="#800000" stroke-width="2"/>
 <path d="M1259.5 508 V523" stroke="#000" stroke-width="1"/>
 <path d="M1259.5 508.5 H1263" stroke="#800000" stroke-width="1"/>
 <path d="M1265.5 508 V523" stroke="#000" stroke-width="1"/>
 <path d="M1266 508 Q1268 513 1270 518.5 L1266 523 Z" fill="#ffee00" stroke="#ff0000" stroke-width="1.3"/>
 <path d="M1266 508 V516" stroke="#ff0000" stroke-width="1.8"/>
 <!-- Stability -->
 <path d="M1256 538.5 L1256.5 541 L1261 544 L1265.5 543.5 L1270 533" fill="none" stroke="#ff0000" stroke-width="1.5"/>
 <path d="M1256 537.5 H1262 V533 M1262 532.5 H1270" fill="none" stroke="#800000" stroke-width="1.6"/>
 <rect x="1261.5" y="532.5" width="3" height="5" fill="#ffee00" stroke="#000" stroke-width="0.8"/>
</svg>


<!-- outputs section -->
<div class="a" style="left:1247px;top:819px;width:135px;height:20px;background:#d3d3d3"></div>
<div class="t" style="left:1250px;top:824px;font-size:11px">Outputs</div>
<div class="a" style="left:1368px;top:831px;width:6px;height:2px;background:#000"></div>
<div class="a" style="left:1251px;top:843px;width:127px;height:21px;background:#d9e5f2;border:1px solid #c5daf0"></div>
<div class="t" style="left:1274px;top:849px;font-size:11px">Add picture</div>
<div class="t" style="left:1251px;top:872px;font-size:11px">Analysis :</div>
<div class="t" style="left:1371px;top:872px;font-size:11px">0</div>
<div class="t" style="left:1251px;top:892px;font-size:11px">Total :</div>
<div class="t" style="left:1371px;top:892px;font-size:11px">0</div>
<div class="a" style="left:1251px;top:908px;width:127px;height:21px;background:#d9e5f2;border:1px solid #c5daf0"></div>
<div class="t" style="left:1273px;top:914px;font-size:11px">List of pictures</div>
<div class="a" style="left:1253px;top:936px;width:123px;height:1px;background:#a0a0a0"></div>
<div class="a" style="left:1251px;top:943px;width:61px;height:41px;background:#d9e5f2;border:1px solid #c5daf0"></div>
<div class="a" style="left:1318px;top:943px;width:60px;height:41px;background:#d9e5f2;border:1px solid #c5daf0"></div>
<div class="a" style="left:1251px;top:988px;width:127px;height:21px;background:#d9e5f2;border:1px solid #c5daf0"></div>
<div class="t" style="left:1273px;top:994px;font-size:11px">Copy view</div>
<svg width="1386" height="1043" style="left:0;top:0">
 <!-- add picture icon -->
 <rect x="1255.5" y="846.5" width="15" height="15" fill="#f0f0f0" stroke="#333"/>
 <path d="M1258.5 849 V858.5 H1265 V855.5 H1258.5 M1258.5 852.5 H1261" fill="none" stroke="#000"/>
 <path d="M1265 851 H1270 M1267.5 848.5 V853.5" stroke="#00a000" stroke-width="1.8"/>
 <!-- list icon -->
 <rect x="1255.5" y="911.5" width="15" height="15" fill="#f0f0f0" stroke="#333"/>
 <path d="M1258.5 914 V923.5 H1265 V920.5 H1258.5 M1258.5 917.5 H1261" fill="none" stroke="#000"/>
 <path d="M1263 914.5 H1264 M1265 914.5 H1269 M1263 916.5 H1264 M1265 916.5 H1269 M1263 918.5 H1264 M1265 918.5 H1269" stroke="#000"/>
 <!-- printers -->
 <g transform="translate(1270,949)">
  <rect x="3.5" y="0.5" width="17" height="8" rx="1" fill="#fff" stroke="#222"/>
  <rect x="0.5" y="7.5" width="23" height="12" rx="2" fill="#b8a27a" stroke="#222"/>
  <rect x="3.5" y="11.5" width="17" height="3" fill="#666" stroke="#222"/>
  <rect x="4.5" y="12.5" width="15" height="17" fill="#fff" stroke="#222"/>
  <path d="M7 16.5 H17 M7 19.5 H17 M7 22.5 H17 M7 25.5 H17" stroke="#222"/>
 </g>
 <g transform="translate(1336,949)">
  <rect x="3.5" y="0.5" width="17" height="8" rx="1" fill="#fff" stroke="#222"/>
  <rect x="0.5" y="7.5" width="23" height="12" rx="2" fill="#b8a27a" stroke="#222"/>
  <rect x="3.5" y="11.5" width="17" height="3" fill="#666" stroke="#222"/>
  <rect x="4.5" y="12.5" width="15" height="17" fill="#fff" stroke="#222"/>
  <path d="M7.5 16 V26 M7.5 16.5 H9 M10 17.5 H16 L14 21 H11.5 M12 19 H14" fill="none" stroke="#e00000" stroke-width="1.3"/>
 </g>
 <!-- copy view icon -->
 <rect x="1255.5" y="990.5" width="8" height="10" fill="#f0f0f0" stroke="#333"/>
 <path d="M1257.5 992 V998.5 H1261.5 V996.5 H1257.5" fill="none" stroke="#000"/>
 <path d="M1265.5 993 V1000 H1267" fill="none" stroke="#00a000" stroke-width="1.2"/>
 <rect x="1264.5" y="1001.5" width="7" height="6" fill="#f0f0f0" stroke="#333"/>
 <!-- gear in left strip -->
 <rect x="5.5" y="760.5" width="42" height="40" fill="#d9e5f2" stroke="#c5daf0"/>
 <g transform="translate(26.5,780.5)">
  <path d="M-2.52 -10.50 L-2.39 -14.30 A14.5 14.5 0 0 1 2.39 -14.30 L2.52 -10.50 A10.8 10.8 0 0 1 5.64 -9.21 L8.42 -11.80 A14.5 14.5 0 0 1 11.80 -8.42 L9.21 -5.64 A10.8 10.8 0 0 1 10.50 -2.52 L14.30 -2.39 A14.5 14.5 0 0 1 14.30 2.39 L10.50 2.52 A10.8 10.8 0 0 1 9.21 5.64 L11.80 8.42 A14.5 14.5 0 0 1 8.42 11.80 L5.64 9.21 A10.8 10.8 0 0 1 2.52 10.50 L2.39 14.30 A14.5 14.5 0 0 1 -2.39 14.30 L-2.52 10.50 A10.8 10.8 0 0 1 -5.64 9.21 L-8.42 11.80 A14.5 14.5 0 0 1 -11.80 8.42 L-9.21 5.64 A10.8 10.8 0 0 1 -10.50 2.52 L-14.30 2.39 A14.5 14.5 0 0 1 -14.30 -2.39 L-10.50 -2.52 A10.8 10.8 0 0 1 -9.21 -5.64 L-11.80 -8.42 A14.5 14.5 0 0 1 -8.42 -11.80 L-5.64 -9.21 A10.8 10.8 0 0 1 -2.52 -10.50 Z" fill="#c6c16b" stroke="#333" stroke-width="1.1" stroke-linejoin="round"/>
  <circle r="6" fill="#fff" stroke="#333" stroke-width="1.1"/>
 </g>
 
</svg>

<!-- bottom panel -->
<div class="a" style="left:1px;top:806px;width:1242px;height:1px;background:#6d6d6d"></div>
<div class="a" style="left:1px;top:807px;width:1242px;height:210px;background:#f0f0f0"></div>

<!-- bottom panel content -->
<div class="a" style="left:4px;top:813px;width:20px;height:201px;background:#d3d3d3"></div>
<div class="a" style="left:16px;top:821px;width:2px;height:6px;background:#000"></div>
<svg width="1386" height="1043" style="left:0;top:0">
 <text transform="translate(18,1011) rotate(-90)" font-family="Liberation Sans" font-size="11" fill="#000" textLength="41" lengthAdjust="spacingAndGlyphs">Analysis</text>
 <!-- toolbar group box -->
 <rect x="30.5" y="819.5" width="1202" height="31" fill="none" stroke="#a0a0a0"/>
 <path d="M31 820.5 H1232" stroke="#fff"/>
 <rect x="35.5" y="823.5" width="87" height="22" fill="#dcdcdc" stroke="#adadad"/>
 <path d="M49 829 L60 834 L49 840 Z" fill="#00e000"/>
 <path d="M48.5 840.5 L60 834.5" stroke="#333" stroke-width="0.8"/>
 <path d="M128.5 821 V849" stroke="#a0a0a0"/>
 <path d="M129.5 821 V849" stroke="#fff"/>
 <rect x="211.5" y="822.5" width="25" height="23" fill="#d9e6f3" stroke="#d0e0f0"/>
 <rect x="217.5" y="828.5" width="13" height="13" rx="3" fill="#fff" stroke="#1a9a1a" stroke-width="1.3"/>
 <path d="M224 830.5 V839.5 M219.5 835 H228.5" stroke="#1a9a1a" stroke-width="2"/>
 <rect x="242.5" y="822.5" width="25" height="23" fill="#d9e6f3" stroke="#d0e0f0"/>
 <rect x="248.5" y="828.5" width="13" height="13" rx="4" fill="#fff" stroke="#a01010" stroke-width="1.3"/>
 <path d="M250.5 835 H259.5" stroke="#a01010" stroke-width="2"/>
 <rect x="275.5" y="823.5" width="25" height="22" fill="#c4dcf2" stroke="#99c9ef"/>
 <!-- group boxes -->
 <rect x="30.5" y="879.5" width="1202" height="62" fill="none" stroke="#c8c8c8"/>
 <rect x="30.5" y="948.5" width="1202" height="59" fill="none" stroke="#c8c8c8"/>
 <rect x="38" y="875" width="133" height="10" fill="#f0f0f0"/>
 <!-- radios -->
 <circle cx="44.5" cy="897.5" r="6" fill="#fff" stroke="#333" stroke-width="1"/>
 <circle cx="44.5" cy="897.5" r="3.3" fill="#333"/>
 <circle cx="44.5" cy="921.5" r="6" fill="#fff" stroke="#333" stroke-width="1"/>
 <!-- checkbox -->
 <rect x="38.5" y="954.5" width="12" height="12" fill="#fff" stroke="#555"/>
 <path d="M41 960 L43.5 963 L48.5 956.5" fill="none" stroke="#000" stroke-width="1.6"/>
 <!-- inputs -->
 <rect x="275.5" y="889.5" width="67" height="20" fill="#fff" stroke="#a9a9a9"/>
 <rect x="275.5" y="974.5" width="67" height="20" fill="#fff" stroke="#a9a9a9"/>
</svg>
<div class="t" style="left:67px;top:831px;font-size:11px;font-weight:bold;letter-spacing:0.55px">Analyze</div>
<div class="t" style="left:134px;top:831px;font-size:11px;font-weight:bold;letter-spacing:0.1px">Analysis :</div>
<div class="t" style="left:281px;top:831px;font-size:11px;letter-spacing:0.5px">[1]</div>
<div class="t" style="left:307px;top:831px;font-size:11px;letter-spacing:0.5px">[2]</div>
<div class="t" style="left:34px;top:859px;font-size:11px;font-weight:bold;color:#0000ff;letter-spacing:0.28px">Calculation is completed.</div>
<div class="t" style="left:40px;top:875px;font-size:11px;letter-spacing:-0.1px">Parameters of the analysis</div>
<div class="t" style="left:53px;top:893px;font-size:11px">Coeff. of reduction of passive pressure :</div>
<div class="t" style="left:53px;top:917px;font-size:11px">Safety factor (Mres/Mov) :</div>
<div class="t" style="left:55px;top:956px;font-size:11px;letter-spacing:-0.35px">Minimum dimensioning pressure</div>
<div class="t" style="left:37px;top:978px;font-size:11px;letter-spacing:-0.13px">Coeff. of minimal dimensioning pressure :</div>
<div class="t" style="left:314px;top:895px;font-size:11.5px;letter-spacing:0.2px">1,00</div>
<div class="t" style="left:313px;top:980px;font-size:11.5px;letter-spacing:0.2px">0,20</div>
<div class="t" style="left:347px;top:894px;font-size:11px;letter-spacing:-0.5px">[–]</div>
<div class="t" style="left:347px;top:979px;font-size:11px;letter-spacing:-0.5px">[–]</div>

<!-- status bar -->
<div class="a" style="left:1px;top:1017px;width:1384px;height:1px;background:#dadada"></div>
<div class="a" style="left:1px;top:1018px;width:1384px;height:24px;background:#f0f0f0"></div>

<svg width="1386" height="1043" style="left:0;top:0"><g fill="#a8a8a8">
  <rect x="1381" y="1032" width="2" height="2"/><rect x="1378" y="1035" width="2" height="2"/><rect x="1381" y="1035" width="2" height="2"/>
  <rect x="1375" y="1038" width="2" height="2"/><rect x="1378" y="1038" width="2" height="2"/><rect x="1381" y="1038" width="2" height="2"/>
</g></svg>
</body></html>
